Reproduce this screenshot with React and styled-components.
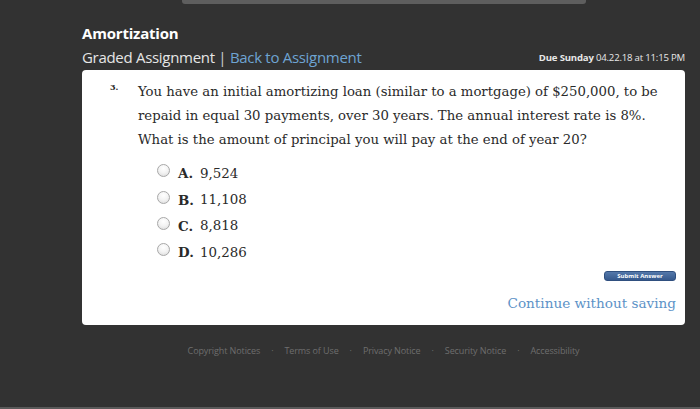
import styled, { createGlobalStyle } from "styled-components";

const GlobalStyle = createGlobalStyle`
  html, body {
    margin: 0;
    padding: 0;
    background: #323232;
  }
`;

const options = [
  { key: "A.", value: "9,524" },
  { key: "B.", value: "11,108" },
  { key: "C.", value: "8,818" },
  { key: "D.", value: "10,286" },
];

const footerLinks = [
  "Copyright Notices",
  "Terms of Use",
  "Privacy Notice",
  "Security Notice",
  "Accessibility",
];

const App = () => {
  return (
    <Page>
      <GlobalStyle />
      <TopBar />
      <Main>
        <Title>Amortization</Title>
        <SubHeader>
          <Crumbs>
            Graded Assignment <Pipe>|</Pipe> <BackLink>Back to Assignment</BackLink>
          </Crumbs>
          <Due>
            <strong>Due Sunday</strong> 04.22.18 at 11:15 PM
          </Due>
        </SubHeader>
        <Card>
          <Question>
            <Number>3.</Number>
            <QuestionBody>
              <Prompt>
                You have an initial amortizing loan (similar to a mortgage) of $250,000, to be
                <br />
                repaid in equal 30 payments, over 30 years. The annual interest rate is 8%.
                <br />
                What is the amount of principal you will pay at the end of year 20?
              </Prompt>
              <OptionList>
                {options.map((o) => (
                  <Option key={o.key}>
                    <Radio />
                    <OptionKey>{o.key}</OptionKey>
                    <span>{o.value}</span>
                  </Option>
                ))}
              </OptionList>
            </QuestionBody>
          </Question>
          <Actions>
            <SubmitButton>Submit Answer</SubmitButton>
            <ContinueLink>Continue without saving</ContinueLink>
          </Actions>
        </Card>
        <Footer>
          {footerLinks.map((l, i) => (
            <FooterItem key={l}>
              {i > 0 && <Dot>·</Dot>}
              {l}
            </FooterItem>
          ))}
        </Footer>
      </Main>
      <BottomEdge />
    </Page>
  );
};

export default App;

const Page = styled.div`
  height: 409px;
  display: flex;
  flex-direction: column;
  background: #323232;
  font-family: "Open Sans", "Noto Sans", sans-serif;
  overflow: hidden;
`;

const TopBar = styled.div`
  height: 4px;
  width: 404px;
  margin-left: 182px;
  background: #5e5e5e;
  border-radius: 0 0 3px 3px;
`;

const Main = styled.div`
  padding: 0 15px 0 82px;
  display: flex;
  flex-direction: column;
`;

const Title = styled.div`
  margin-top: 18px;
  color: #fff;
  font-size: 15px;
  font-weight: 700;
  letter-spacing: -0.2px;
  line-height: 22px;
`;

const SubHeader = styled.div`
  display: flex;
  justify-content: space-between;
  align-items: flex-end;
  margin-top: 1px;
  height: 22px;
`;

const Crumbs = styled.div`
  color: #e6e6e6;
  font-size: 15px;
  letter-spacing: -0.3px;
  line-height: 20px;
`;

const Pipe = styled.span`
  color: #d0d0d0;
`;

const BackLink = styled.span`
  color: #6ea4d2;
`;

const Due = styled.div`
  color: #e8e8e8;
  font-size: 9.6px;
  letter-spacing: -0.2px;
  line-height: 14px;
  margin-bottom: 2px;

  strong {
    font-weight: 700;
  }
`;

const Card = styled.div`
  margin-top: 3px;
  background: #fff;
  border-radius: 4px;
  height: 255px;
  box-sizing: border-box;
  padding: 10px 9px 0 28px;
  display: flex;
  flex-direction: column;
`;

const Question = styled.div`
  display: flex;
  gap: 20px;
`;

const Number = styled.div`
  font-family: "DejaVu Serif", serif;
  font-weight: 700;
  font-size: 8px;
  line-height: 10px;
  color: #222;
  margin-top: 2px;
  width: 8px;
`;

const QuestionBody = styled.div`
  display: flex;
  flex-direction: column;
`;

const Prompt = styled.div`
  font-family: "DejaVu Serif", serif;
  font-size: 13.25px;
  line-height: 24px;
  color: #2a2a2a;
  white-space: nowrap;
`;

const OptionList = styled.div`
  margin-top: 8px;
  margin-left: 19px;
  display: flex;
  flex-direction: column;
`;

const Option = styled.div`
  display: flex;
  align-items: center;
  height: 26.4px;
  font-family: "DejaVu Serif", serif;
  font-size: 13.4px;
  color: #2a2a2a;
`;

const Radio = styled.span`
  width: 11px;
  height: 11px;
  border-radius: 50%;
  border: 1px solid #a8a8a8;
  background: radial-gradient(circle at 50% 30%, #ffffff 0%, #f3f3f3 50%, #d8d8d8 100%);
  margin-right: 8px;
  margin-top: -5px;
  box-sizing: content-box;
`;

const OptionKey = styled.span`
  font-weight: 700;
  width: 22px;
`;

const Actions = styled.div`
  margin-top: auto;
  margin-bottom: 12px;
  display: flex;
  flex-direction: column;
  align-items: flex-end;
  gap: 12px;
`;

const SubmitButton = styled.button`
  width: 72px;
  height: 10px;
  padding: 0;
  border: 1px solid #2f4f7f;
  border-radius: 3px;
  background: linear-gradient(#5478aa, #36598d);
  color: #fff;
  font-family: "Open Sans", sans-serif;
  font-size: 6px;
  font-weight: 700;
  line-height: 8px;
`;

const ContinueLink = styled.span`
  font-family: "DejaVu Serif", serif;
  font-size: 13.6px;
  color: #5c92c7;
  line-height: 20px;
`;

const Footer = styled.div`
  display: flex;
  justify-content: center;
  margin-top: 19px;
  padding-right: 0;
  color: #6e6e6e;
  font-size: 9px;
  letter-spacing: -0.1px;
`;

const FooterItem = styled.span`
  display: inline-flex;
  align-items: center;
`;

const Dot = styled.span`
  margin: 0 11px;
`;

const BottomEdge = styled.div`
  margin-top: auto;
  height: 2px;
  background: #5a5a5a;
`;
